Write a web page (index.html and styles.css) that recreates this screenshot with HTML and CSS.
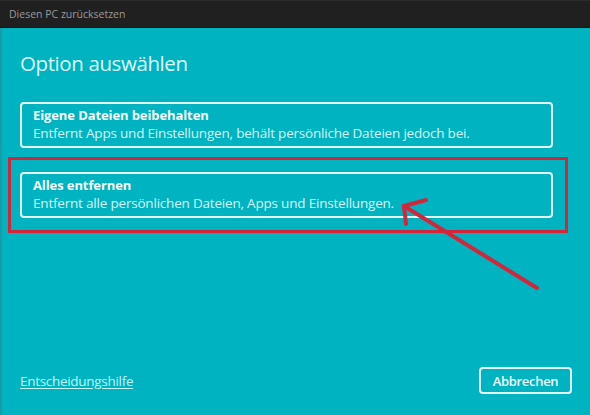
FILE: index.html
```html
<!DOCTYPE html>
<html lang="de">
<head>
<meta charset="utf-8">
<title>Diesen PC zurücksetzen</title>
<link rel="stylesheet" href="styles.css">
</head>
<body>
<div class="window">
  <div class="titlebar">Diesen PC zurücksetzen</div>
  <main class="content">
    <h1 class="heading">Option auswählen</h1>
    <div class="options">
      <div class="card">
        <div class="card-title">Eigene Dateien beibehalten</div>
        <div class="card-text">Entfernt Apps und Einstellungen, behält persönliche Dateien jedoch bei.</div>
      </div>
      <div class="highlight">
        <div class="card">
          <div class="card-title">Alles entfernen</div>
          <div class="card-text">Entfernt alle persönlichen Dateien, Apps und Einstellungen.</div>
        </div>
      </div>
    </div>
    <div class="footer">
      <a class="help-link" href="#">Entscheidungshilfe</a>
      <button class="cancel">Abbrechen</button>
    </div>
    <svg class="arrow" width="590" height="415" viewBox="0 0 590 415">
      <g stroke="#d3263a" stroke-width="4" stroke-linecap="round" fill="none">
        <line x1="537" y1="288" x2="404" y2="206"/>
        <line x1="404" y1="206" x2="426" y2="200"/>
        <line x1="404" y1="206" x2="406" y2="224"/>
      </g>
    </svg>
  </main>
</div>
</body>
</html>
```
FILE: styles.css
```css
html, body {
  margin: 0;
  padding: 0;
}
body {
  width: 590px;
  height: 415px;
  overflow: hidden;
  font-family: "Open Sans", "Noto Sans", sans-serif;
}
.window {
  display: flex;
  flex-direction: column;
  height: 415px;
  position: relative;
}
.titlebar {
  height: 28px;
  box-sizing: border-box;
  background: #202020;
  border-top: 1px solid #2c2c2c;
  border-bottom: 1px solid #161616;
  color: #9a9a9a;
  font-size: 10.5px;
  line-height: 26px;
  padding-left: 9px;
}
.content {
  flex: 1;
  display: flex;
  flex-direction: column;
  background: #00b3c1;
  border-left: 2px solid #1d9aa5;
  padding: 0 18px 21px 18px;
}
.heading {
  margin: 20px 0 0 0;
  font-size: 20.5px;
  font-weight: 400;
  line-height: 30px;
  color: #dcfafc;
  letter-spacing: -0.4px;
}
.options {
  margin-top: 24px;
  display: flex;
  flex-direction: column;
}
.card {
  border: 2px solid #e4fbfc;
  border-radius: 4px;
  padding: 2px 11px 3px;
  height: 46px;
  box-sizing: border-box;
  width: 533px;
}
.card-title {
  font-size: 13px;
  font-weight: 700;
  line-height: 18px;
  color: #f4fefe;
  letter-spacing: -0.1px;
}
.card-text {
  font-size: 13.5px;
  line-height: 19px;
  color: #d2f6f8;
  letter-spacing: -0.2px;
}
.highlight {
  margin: 9px 0 0 -12px;
  border: 3px solid #d3263a;
  padding: 12px 12px 12px 9px;
  width: 560px;
  box-sizing: border-box;
}
.footer {
  margin-top: auto;
  display: flex;
  justify-content: space-between;
  align-items: center;
}
.help-link {
  color: #bff6fa;
  font-size: 13.5px;
  letter-spacing: -0.3px;
  text-decoration: underline;
  text-underline-offset: 2px;
}
.cancel {
  width: 93px;
  height: 27px;
  border: 2px solid #e4fbfc;
  border-radius: 4px;
  background: transparent;
  color: #eafcfd;
  font-family: inherit;
  font-size: 13px;
  font-weight: 600;
  letter-spacing: -0.3px;
  padding: 0;
}
.arrow {
  position: absolute;
  left: 0;
  top: 0;
  pointer-events: none;
}
```
